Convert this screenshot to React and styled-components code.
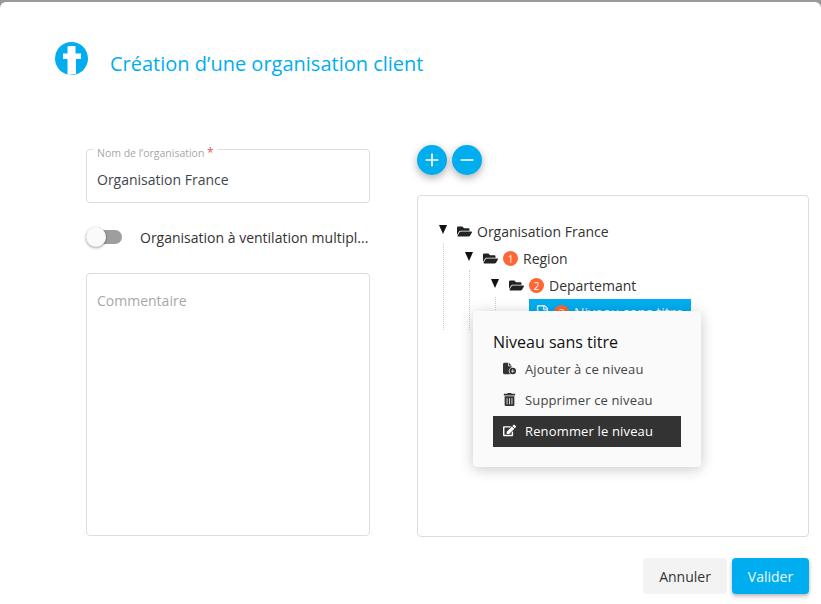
import React from "react";
import styled, { createGlobalStyle } from "styled-components";
import { Plus, Minus } from "lucide-react";
import { FaFolderOpen, FaRegFile, FaTrashAlt, FaEdit } from "react-icons/fa";
import { FaFileCirclePlus } from "react-icons/fa6";

const Global = createGlobalStyle`
  html, body {
    margin: 0;
    padding: 0;
    background: #9a9a9a;
    overflow: hidden;
  }
  * { box-sizing: border-box; }
`;

const Modal = styled.div`
  position: relative;
  width: 821px;
  height: 602px;
  margin-top: 2px;
  background: white;
  border-radius: 6px 6px 0 0;
  font-family: "Open Sans", "Noto Sans", sans-serif;
  color: #333;
  overflow: hidden;
`;

const Header = styled.header`
  display: flex;
  align-items: flex-start;
  height: 143px;
  padding: 40px 0 0 55px;
`;

const Title = styled.h1`
  margin: 8px 0 0 22px;
  font-size: 20px;
  line-height: 27px;
  font-weight: 400;
  color: #00aeef;
`;

const Columns = styled.div`
  display: flex;
  padding: 0 12px 0 86px;
  gap: 47px;
`;

const LeftCol = styled.div`
  width: 284px;
  padding-top: 4px;
`;

const RightCol = styled.div`
  position: relative;
  width: 392px;
`;

const Field = styled.div`
  position: relative;
  height: 54px;
  border: 1px solid #dcdcdc;
  border-radius: 4px;
  padding: 20px 10px 0;
  font-size: 14px;
  line-height: 19px;
  color: #3f4650;
`;

const FieldLabel = styled.span`
  position: absolute;
  top: -5px;
  left: 6px;
  padding: 0 4px;
  background: white;
  font-size: 10.5px;
  line-height: 15px;
  color: #a8a8a8;
`;

const Required = styled.span`
  font-size: 12px;
  color: #e25555;
`;

const ToggleRow = styled.div`
  display: flex;
  align-items: center;
  height: 24px;
  margin: 22px 0 24px;
`;

const Toggle = styled.span`
  position: relative;
  display: block;
  width: 36px;
  height: 14px;
  border-radius: 7px;
  background: #9e9e9e;
`;

const ToggleKnob = styled.span`
  position: absolute;
  top: -3px;
  left: 0;
  width: 20px;
  height: 20px;
  border-radius: 50%;
  background: #fafafa;
  box-shadow: 0 1px 3px rgba(0, 0, 0, 0.4);
`;

const ToggleLabel = styled.span`
  margin-left: 18px;
  font-size: 14px;
  color: #333;
  white-space: nowrap;
`;

const Comment = styled.div`
  height: 263px;
  border: 1px solid #dcdcdc;
  border-radius: 4px;
  padding: 17px 10px;
  font-size: 14px;
  line-height: 20px;
  color: #a8a8a8;
`;

const RoundRow = styled.div`
  display: flex;
  gap: 5px;
  height: 50px;
`;

const RoundBtn = styled.button`
  display: flex;
  align-items: center;
  justify-content: center;
  width: 30px;
  height: 30px;
  padding: 0;
  border: none;
  border-radius: 50%;
  background: #00aeef;
  color: white;
  box-shadow: 0 3px 8px rgba(0, 0, 0, 0.32);
`;

const TreeBox = styled.div`
  height: 342px;
  border: 1px solid #dcdcdc;
  border-radius: 4px;
  padding: 22px 21px;
`;

const Row = styled.div`
  display: flex;
  align-items: center;
  height: 27px;
  margin-left: ${(p) => p.$level * 26}px;
  font-size: 14px;
  color: #333;
`;

const Guide = styled.span`
  position: absolute;
  left: ${(p) => p.$x}px;
  top: ${(p) => p.$top}px;
  height: ${(p) => p.$height}px;
  border-left: 1px dotted #cfcfcf;
`;

const Arrow = styled.span`
  width: 0;
  height: 0;
  margin-right: 10px;
  margin-top: -5px;
  border-left: 4.5px solid transparent;
  border-right: 4.5px solid transparent;
  border-top: 9px solid #111;
`;

const Folder = styled(FaFolderOpen)`
  width: 15px;
  height: 15px;
  color: #222;
  margin-right: 5px;
`;

const Badge = styled.span`
  display: flex;
  align-items: center;
  justify-content: center;
  width: 15px;
  height: 15px;
  margin-right: 5px;
  border-radius: 50%;
  background: #ff6633;
  color: white;
  font-size: 10px;
`;

const Selected = styled.div`
  display: flex;
  align-items: center;
  width: 162px;
  height: 27px;
  margin-left: 12px;
  padding-left: 7px;
  background: #00aeef;
  color: #e8f7fd;
  white-space: nowrap;
`;

const FileIcon = styled(FaRegFile)`
  width: 13px;
  height: 15px;
  margin-right: 5px;
  color: #d8f2fc;
`;

const Menu = styled.div`
  position: absolute;
  left: 56px;
  top: 166px;
  width: 228px;
  height: 156px;
  padding: 20px 20px 0;
  border-radius: 4px;
  background: #fafafa;
  box-shadow: 0 2px 14px rgba(0, 0, 0, 0.22);
`;

const MenuTitle = styled.div`
  font-size: 16px;
  line-height: 22px;
  color: #111;
  margin-bottom: 1px;
`;

const MenuItem = styled.div`
  display: flex;
  align-items: center;
  height: 31px;
  padding: 0 0 2px 10px;
  font-size: 13px;
  letter-spacing: 0.15px;
  background: ${(p) => (p.$active ? "#333" : "transparent")};
  color: ${(p) => (p.$active ? "white" : "#444")};

  svg {
    width: 13px;
    height: 13px;
    margin-right: 9px;
    color: ${(p) => (p.$active ? "white" : "#333")};
  }
`;

const Footer = styled.footer`
  display: flex;
  justify-content: flex-end;
  gap: 5px;
  padding: 21px 12px 0 0;
`;

const Cancel = styled.button`
  width: 84px;
  height: 36px;
  border: none;
  border-radius: 4px;
  background: #f3f3f3;
  color: #333;
  font-family: inherit;
  font-size: 14px;
`;

const Submit = styled.button`
  width: 77px;
  height: 36px;
  border: none;
  border-radius: 4px;
  background: #00aeef;
  color: #eafaff;
  font-family: inherit;
  font-size: 14px;
  box-shadow: 0 2px 4px rgba(0, 0, 0, 0.3);
`;

function Logo() {
  return (
    <svg width="33" height="33" viewBox="0 0 33 33">
      <circle cx="16.5" cy="16.5" r="16.5" fill="#00aeef" />
      <path d="M12.5 33 V17 H8 V11.5 H12.5 V5 Q12.5 4 13.5 4 H20.5 V11.5 H26 V17 H21 V32 Z" fill="white" />
    </svg>
  );
}

export default function App() {
  return (
    <>
      <Global />
      <Modal>
        <Header>
          <Logo />
          <Title>Création d’une organisation client</Title>
        </Header>
        <Columns>
          <LeftCol>
            <Field>
              <FieldLabel>Nom de l’organisation <Required>*</Required></FieldLabel>
              Organisation France
            </Field>
            <ToggleRow>
              <Toggle><ToggleKnob /></Toggle>
              <ToggleLabel>Organisation à ventilation multipl...</ToggleLabel>
            </ToggleRow>
            <Comment>Commentaire</Comment>
          </LeftCol>
          <RightCol>
            <RoundRow>
              <RoundBtn><Plus size={20} strokeWidth={2} /></RoundBtn>
              <RoundBtn><Minus size={20} strokeWidth={2} /></RoundBtn>
            </RoundRow>
            <TreeBox>
              <Row $level={0}><Arrow /><Folder />Organisation France</Row>
              <Row $level={1}><Arrow /><Folder /><Badge>1</Badge>Region</Row>
              <Row $level={2}><Arrow /><Folder /><Badge>2</Badge>Departemant</Row>
              <Row $level={3}>
                <Selected><FileIcon /><Badge>3</Badge>Niveau sans titre</Selected>
              </Row>
            </TreeBox>
            <Guide $x={26} $top={98} $height={87} />
            <Guide $x={52} $top={125} $height={60} />
            <Guide $x={78} $top={152} $height={33} />
            <Menu>
              <MenuTitle>Niveau sans titre</MenuTitle>
              <MenuItem><FaFileCirclePlus />Ajouter à ce niveau</MenuItem>
              <MenuItem><FaTrashAlt />Supprimer ce niveau</MenuItem>
              <MenuItem $active><FaEdit />Renommer le niveau</MenuItem>
            </Menu>
          </RightCol>
        </Columns>
        <Footer>
          <Cancel>Annuler</Cancel>
          <Submit>Valider</Submit>
        </Footer>
      </Modal>
    </>
  );
}
